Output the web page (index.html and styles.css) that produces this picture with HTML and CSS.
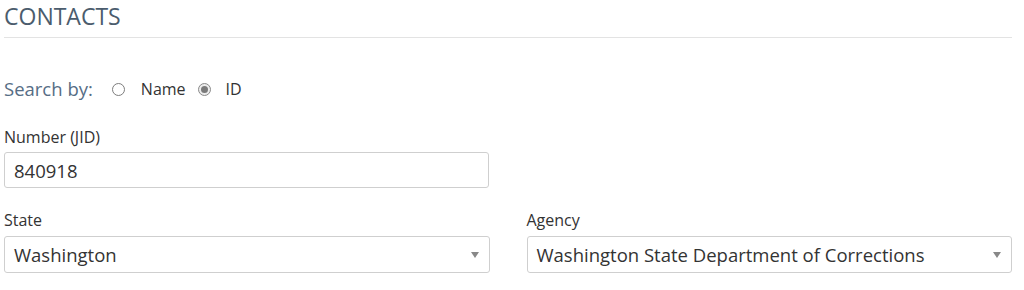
FILE: index.html
```html
<!DOCTYPE html>
<html>
<head>
<meta charset="utf-8">
<link rel="stylesheet" href="styles.css">
</head>
<body>
<div class="page">
  <h2 class="title">CONTACTS</h2>
  <div class="search-row">
    <span class="search-label">Search by:</span>
    <span class="radio"></span>
    <span class="radio-text">Name</span>
    <span class="radio checked"></span>
    <span class="radio-text">ID</span>
  </div>
  <div class="field half">
    <label class="label">Number (JID)</label>
    <input class="input" type="text" value="840918">
  </div>
  <div class="grid">
    <div class="field">
      <label class="label">State</label>
      <div class="select"><span>Washington</span><span class="caret"></span></div>
    </div>
    <div class="field">
      <label class="label">Agency</label>
      <div class="select"><span>Washington State Department of Corrections</span><span class="caret"></span></div>
    </div>
  </div>
</div>
</body>
</html>
```
FILE: styles.css
```css
html, body {
  margin: 0;
  padding: 0;
  background: #fff;
}
body {
  font-family: "Open Sans", "DejaVu Sans", sans-serif;
  color: #333;
}
.page {
  width: 1008px;
  margin-left: 4px;
}
.title {
  margin: 0;
  font-size: 23px;
  font-weight: 400;
  line-height: 32px;
  padding-bottom: 5px;
  color: #4b5c6d;
  border-bottom: 1px solid #e3e3e3;
}
.search-row {
  margin-top: 38px;
  display: flex;
  align-items: center;
  height: 26px;
}
.search-label {
  font-size: 18.5px;
  line-height: 26px;
  color: #566d85;
  margin-right: 19px;
}
.radio {
  flex: none;
  width: 13px;
  height: 13px;
  box-sizing: border-box;
  border: 1px solid #7d7d7d;
  border-radius: 50%;
  background: #fff;
  display: flex;
  align-items: center;
  justify-content: center;
}
.radio.checked {
  background: #ececec;
  border-color: #8a8a8a;
}
.radio.checked::after {
  content: "";
  width: 7px;
  height: 7px;
  border-radius: 50%;
  background: #7a7a7a;
}
.radio-text {
  font-size: 16px;
  line-height: 26px;
  color: #333;
  margin-left: 16px;
  margin-right: 12px;
}
.radio.checked + .radio-text {
  margin-left: 15px;
}
.field {
  display: flex;
  flex-direction: column;
}
.half {
  width: 485px;
  margin-top: 24px;
}
.label {
  font-size: 16px;
  line-height: 22px;
  color: #333;
  margin-bottom: 4px;
}
.input {
  box-sizing: border-box;
  height: 36px;
  width: 100%;
  margin: 0;
  border: 1px solid #cfcfcf;
  border-radius: 3px;
  padding: 0 9px;
  font-family: "Open Sans", "DejaVu Sans", sans-serif;
  font-size: 18.5px;
  color: #333;
  outline: none;
}
.grid {
  display: grid;
  grid-template-columns: 1fr 1fr;
  column-gap: 37px;
  margin-top: 21px;
}
.grid .label {
  margin-bottom: 5px;
}
.select {
  box-sizing: border-box;
  height: 37px;
  border: 1px solid #cfcfcf;
  border-radius: 3px;
  padding: 0 10px 0 9px;
  display: flex;
  align-items: center;
  justify-content: space-between;
  font-size: 18.5px;
  color: #333;
}
.caret {
  flex: none;
  width: 0;
  height: 0;
  border-left: 4px solid transparent;
  border-right: 4px solid transparent;
  border-top: 6px solid #888;
}
```
